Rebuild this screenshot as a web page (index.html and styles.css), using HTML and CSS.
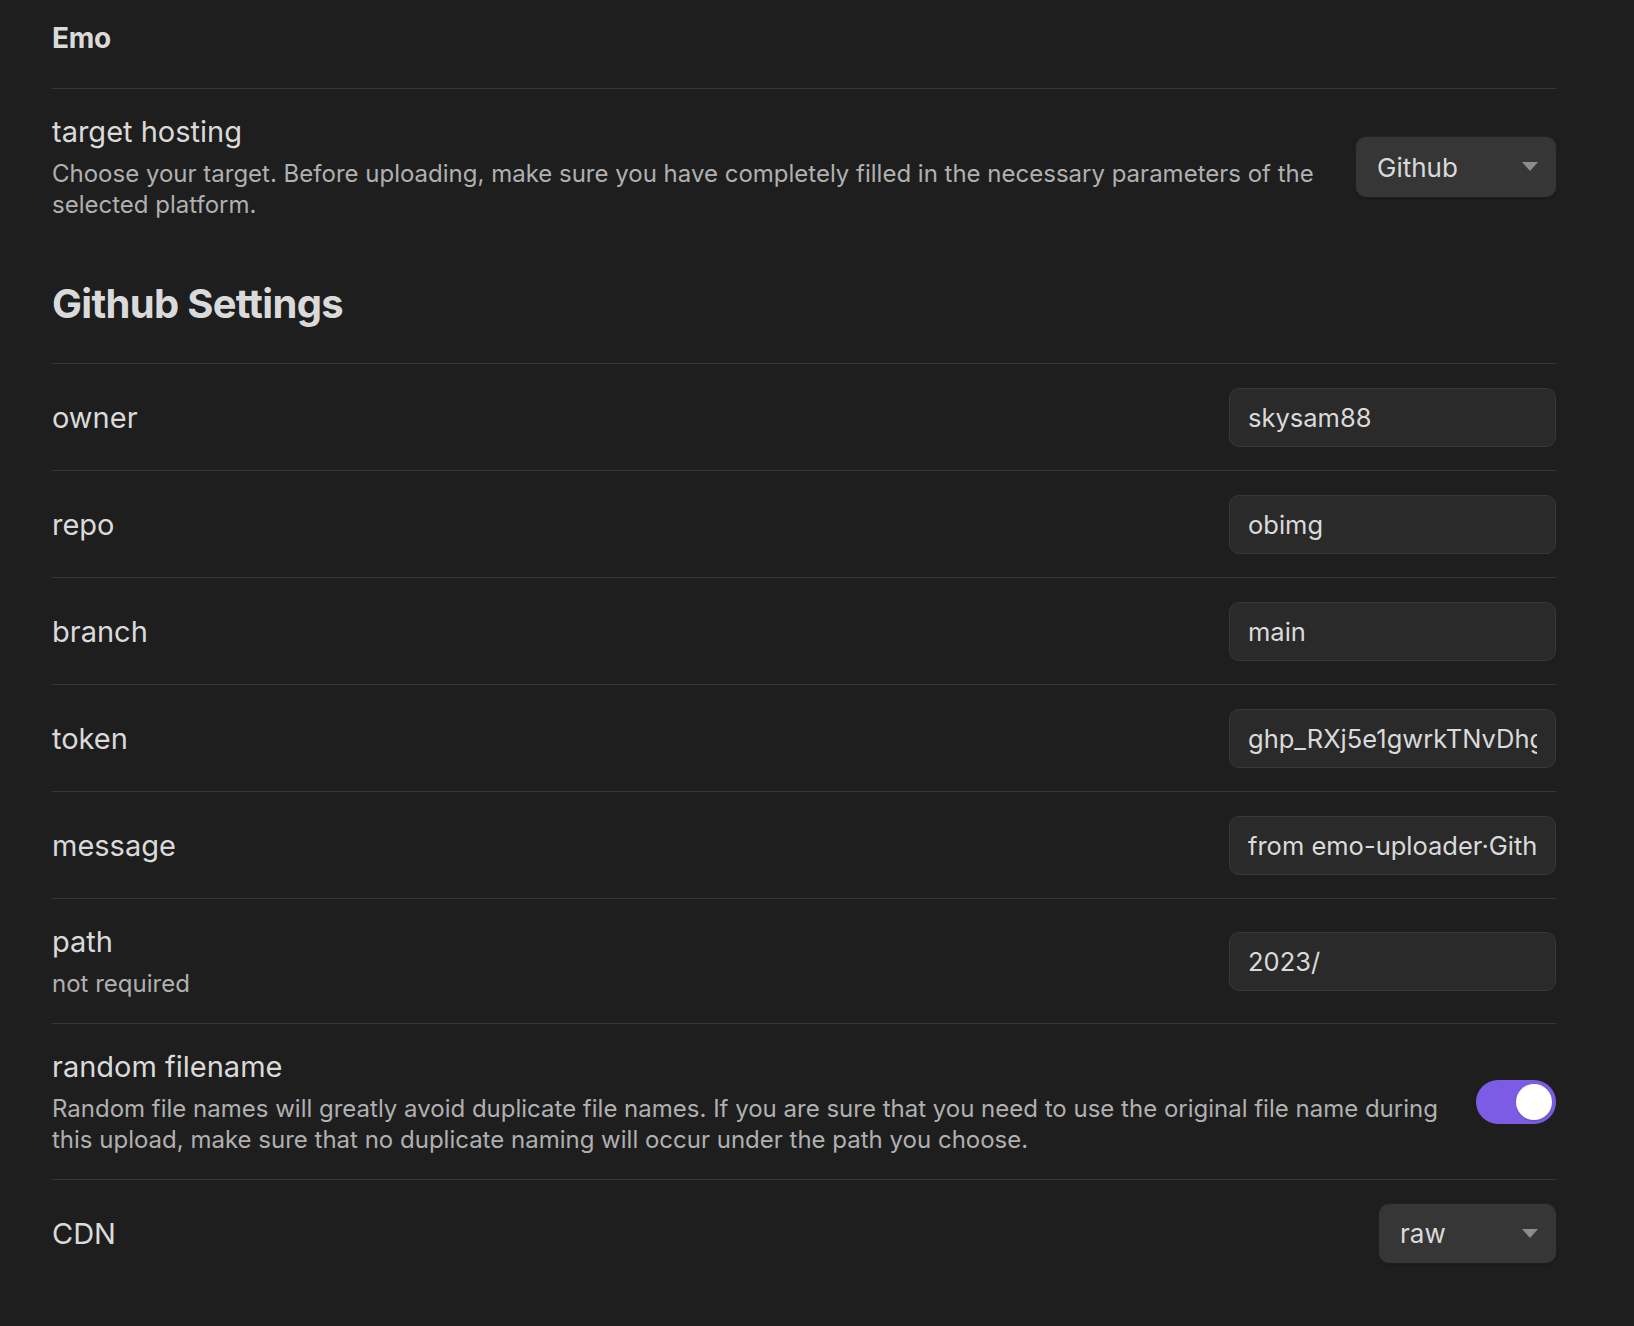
FILE: index.html
```html
<!DOCTYPE html>
<html lang="en">
<head>
<meta charset="utf-8">
<title>Emo settings</title>
<link rel="stylesheet" href="styles.css">
</head>
<body>
<div class="settings">
  <h2 class="plugin-title">Emo</h2>

  <div class="setting-item">
    <div class="setting-info">
      <div class="setting-name">target hosting</div>
      <div class="setting-desc">Choose your target. Before uploading, make sure you have completely filled in the necessary parameters of the selected platform.</div>
    </div>
    <div class="setting-control">
      <div class="dropdown dropdown-wide">
        <span>Github</span>
        <svg class="caret" width="16" height="10" viewBox="0 0 16 10"><path d="M0 0 H16 L8 9 Z" fill="#8c8c8c"/></svg>
      </div>
    </div>
  </div>

  <div class="setting-heading">
    <h3 class="heading-text">Github Settings</h3>
  </div>

  <div class="setting-item">
    <div class="setting-info"><div class="setting-name">owner</div></div>
    <div class="setting-control"><input class="text-input" type="text" value="skysam88"></div>
  </div>

  <div class="setting-item">
    <div class="setting-info"><div class="setting-name">repo</div></div>
    <div class="setting-control"><input class="text-input" type="text" value="obimg"></div>
  </div>

  <div class="setting-item">
    <div class="setting-info"><div class="setting-name">branch</div></div>
    <div class="setting-control"><input class="text-input" type="text" value="main"></div>
  </div>

  <div class="setting-item">
    <div class="setting-info"><div class="setting-name">token</div></div>
    <div class="setting-control"><input class="text-input" type="text" value="ghp_RXj5e1gwrkTNvDhgQ2p8Lm"></div>
  </div>

  <div class="setting-item">
    <div class="setting-info"><div class="setting-name">message</div></div>
    <div class="setting-control"><input class="text-input" type="text" value="from emo-uploader·Github"></div>
  </div>

  <div class="setting-item">
    <div class="setting-info">
      <div class="setting-name">path</div>
      <div class="setting-desc">not required</div>
    </div>
    <div class="setting-control"><input class="text-input" type="text" value="2023/"></div>
  </div>

  <div class="setting-item">
    <div class="setting-info">
      <div class="setting-name">random filename</div>
      <div class="setting-desc">Random file names will greatly avoid duplicate file names. If you are sure that you need to use the original file name during this upload, make sure that no duplicate naming will occur under the path you choose.</div>
    </div>
    <div class="setting-control">
      <div class="toggle is-enabled"><div class="toggle-knob"></div></div>
    </div>
  </div>

  <div class="setting-item">
    <div class="setting-info"><div class="setting-name">CDN</div></div>
    <div class="setting-control">
      <div class="dropdown dropdown-narrow">
        <span>raw</span>
        <svg class="caret" width="16" height="10" viewBox="0 0 16 10"><path d="M0 0 H16 L8 9 Z" fill="#8c8c8c"/></svg>
      </div>
    </div>
  </div>
</div>
</body>
</html>
```

FILE: styles.css
```css
html, body {
  margin: 0;
  padding: 0;
  background: #1e1e1e;
}

body {
  font-family: Inter, "Noto Sans", sans-serif;
  color: #dadada;
  -webkit-font-smoothing: antialiased;
}

.settings {
  width: 1504px;
  margin-left: 52px;
  padding-bottom: 40px;
}

.plugin-title {
  margin: 21px 0 33px;
  font-size: 28px;
  line-height: 34px;
  font-weight: 700;
  letter-spacing: -0.3px;
  color: #dadada;
}

.setting-item {
  display: flex;
  align-items: center;
  border-top: 1px solid #363636;
  padding: 24px 0 23px;
}

.setting-info {
  flex: 1 1 auto;
  margin-right: 32px;
}

.setting-name {
  font-size: 29px;
  line-height: 37px;
  color: #dadada;
}

.setting-desc {
  padding-top: 8px;
  padding-bottom: 1px;
  font-size: 24px;
  line-height: 31px;
  color: #b0b0b0;
}

.setting-control {
  flex: 0 0 auto;
  display: flex;
  align-items: center;
  justify-content: flex-end;
}

.setting-heading {
  padding: 35px 0 34px;
}

.heading-text {
  margin: 0;
  font-size: 40px;
  line-height: 50px;
  font-weight: 700;
  letter-spacing: -0.7px;
  color: #dadada;
}

.text-input {
  box-sizing: border-box;
  width: 327px;
  height: 59px;
  padding: 0 18px;
  background: #2a2a2a;
  border: 1.5px solid #383838;
  border-radius: 10px;
  color: #dadada;
  font-family: Inter, "Noto Sans", sans-serif;
  font-size: 25.5px;
  outline: none;
}

.dropdown {
  box-sizing: border-box;
  height: 60px;
  display: flex;
  align-items: center;
  justify-content: space-between;
  padding: 0 18px 0 21px;
  background: #363636;
  border-radius: 10px;
  box-shadow: 0 1px 3px rgba(0, 0, 0, 0.35), 0 0 0 1px rgba(255, 255, 255, 0.03);
  font-size: 26px;
  color: #dadada;
}

.dropdown-wide {
  width: 200px;
}

.dropdown-narrow {
  width: 177px;
  height: 59px;
}

.caret {
  display: block;
}

.toggle {
  width: 80px;
  height: 44px;
  border-radius: 22px;
  background: #7c5ce4;
  display: flex;
  align-items: center;
  justify-content: flex-end;
  padding: 0 4px;
  box-sizing: border-box;
}

.toggle-knob {
  width: 36px;
  height: 36px;
  border-radius: 50%;
  background: #ffffff;
  box-shadow: 0 1px 2px rgba(0, 0, 0, 0.2);
}
```
